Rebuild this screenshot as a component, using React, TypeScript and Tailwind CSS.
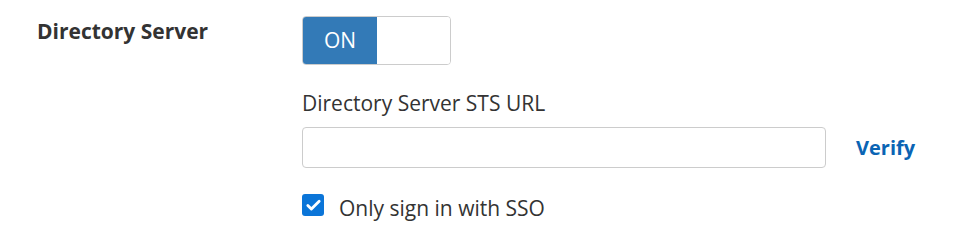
import { Check } from "lucide-react";

export default function App() {
  return (
    <div
      className="flex h-[242px] w-[966px] bg-white pt-4 text-[#333]"
      style={{ fontFamily: '"Open Sans", sans-serif' }}
    >
      <div className="w-[302px] shrink-0 pl-[37px]">
        <h3 className="text-[21px] font-bold leading-[30px]">Directory Server</h3>
      </div>
      <div className="flex flex-col">
        <div className="flex h-[49px] w-[149px] overflow-hidden rounded-[4px] border border-[#ccc]">
          <div className="flex w-[74px] items-center justify-center bg-[#337ab7] text-[21px] text-white">
            ON
          </div>
          <div className="flex-1 bg-white" />
        </div>
        <label className="mt-[23px] text-[21px] leading-[30px] text-[#333]">
          Directory Server STS URL
        </label>
        <div className="mt-[9px] flex items-center">
          <input
            type="text"
            className="h-[41px] w-[524px] rounded-[4px] border border-[#ccc] px-3 outline-none"
          />
          <button className="ml-[30px] text-[20px] font-bold text-[#0a64b4]">
            Verify
          </button>
        </div>
        <label className="mt-[25px] flex items-center gap-[15px] text-[21px] leading-[30px]">
          <span className="-mt-[6px] flex h-[22px] w-[22px] items-center justify-center rounded-[3px] bg-[#0b75d8]">
            <Check className="h-[17px] w-[17px] text-white" strokeWidth={4} />
          </span>
          Only sign in with SSO
        </label>
      </div>
    </div>
  );
}
